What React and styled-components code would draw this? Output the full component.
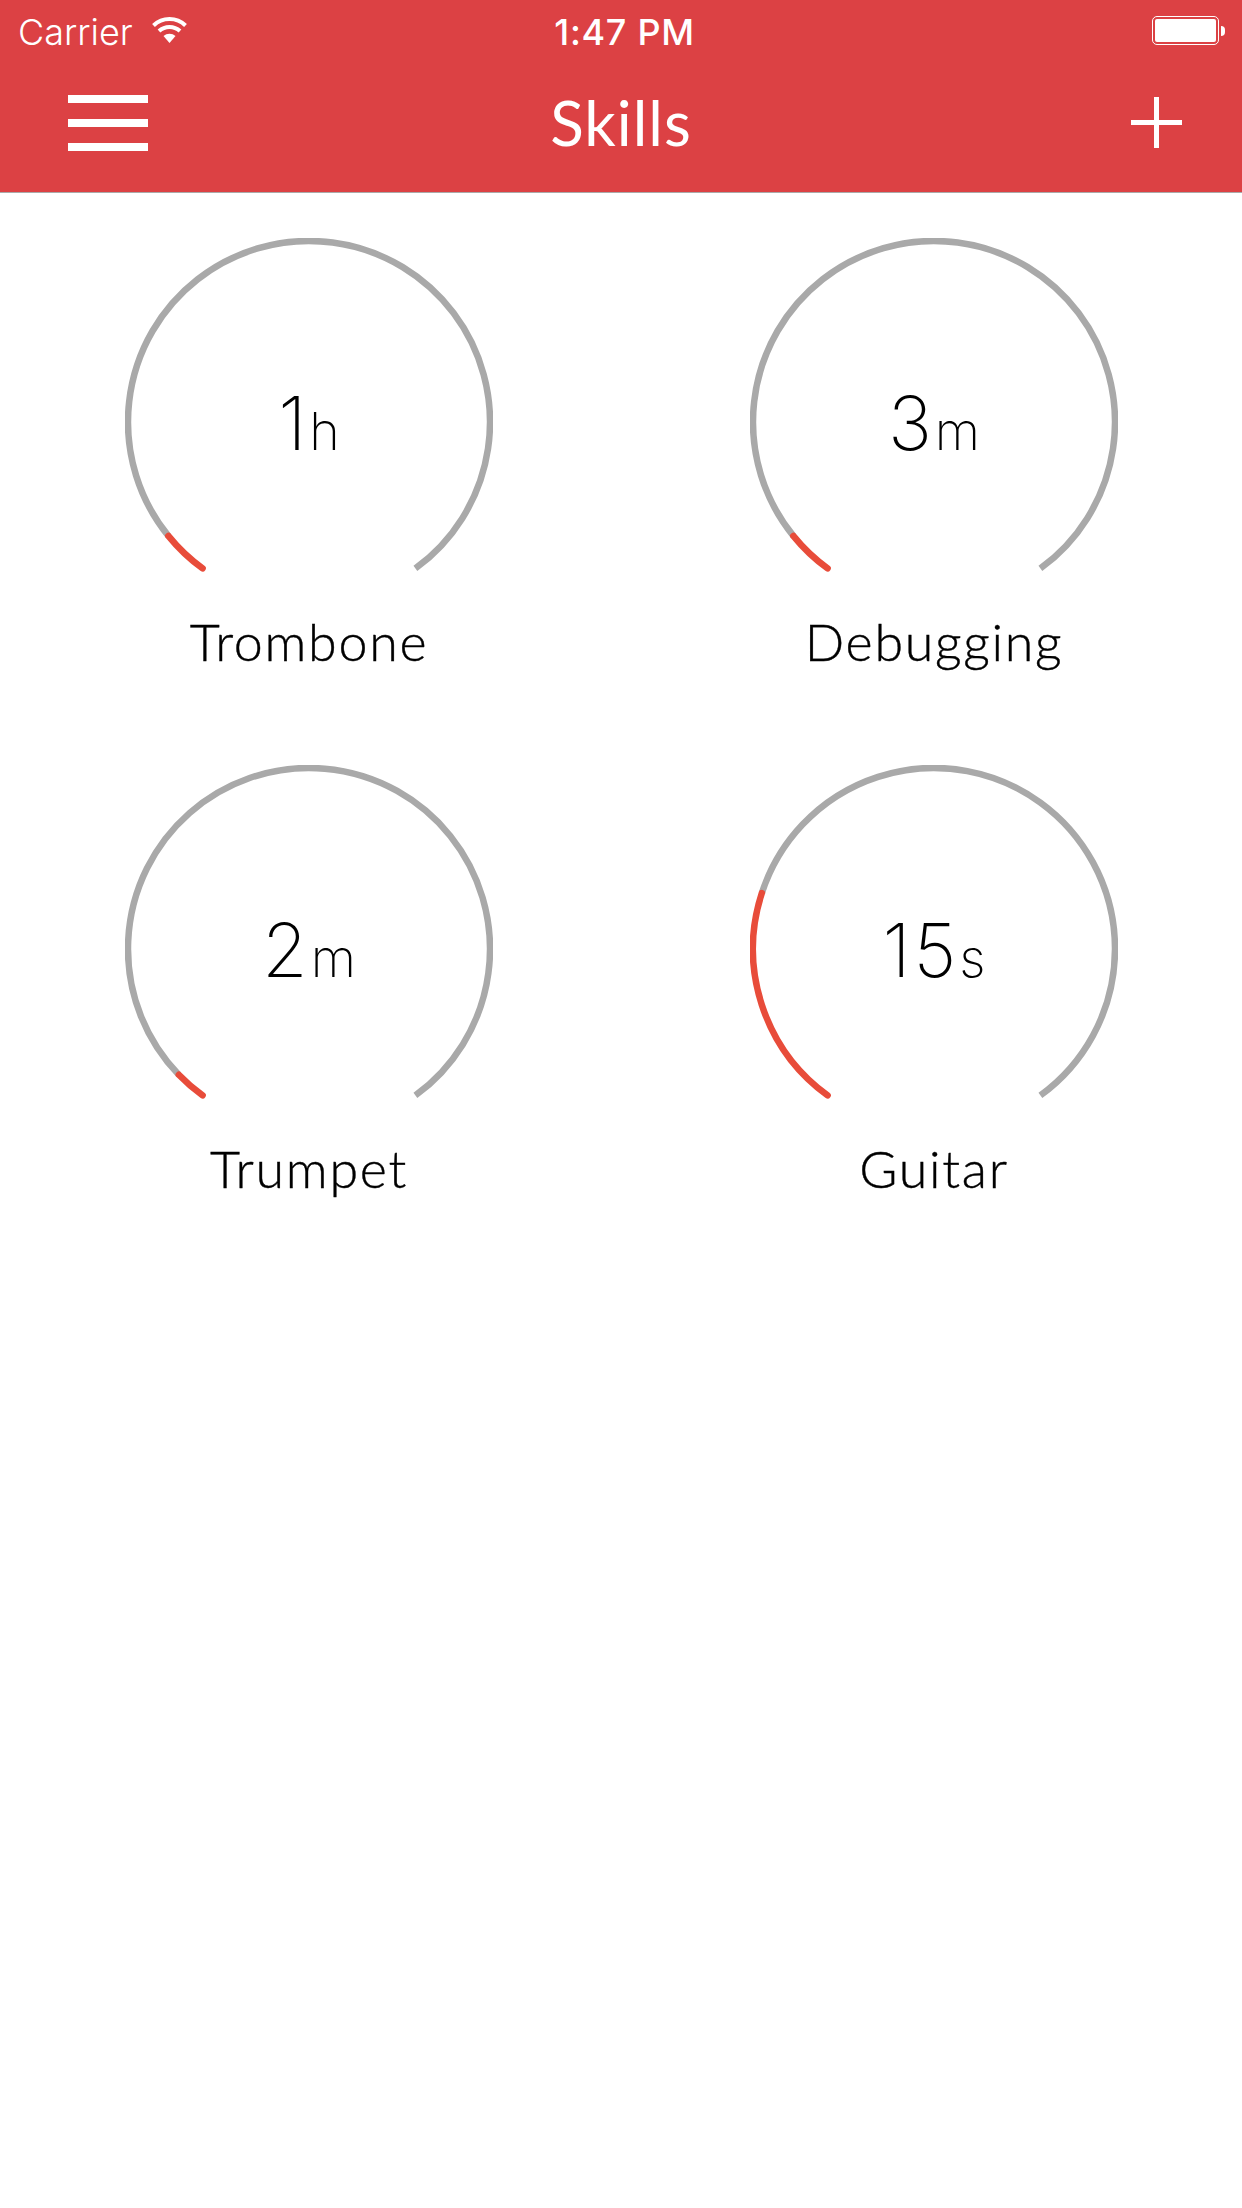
import styled, { createGlobalStyle } from "styled-components";

const GlobalStyle = createGlobalStyle`
  html, body {
    margin: 0;
    padding: 0;
    background: #ffffff;
  }
`;

const skills = [
  { name: "Trombone", value: "1", unit: "h", progress: 15 },
  { name: "Debugging", value: "3", unit: "m", progress: 15 },
  { name: "Trumpet", value: "2", unit: "m", progress: 10 },
  { name: "Guitar", value: "15", unit: "s", progress: 72 }
];

// angles are measured clockwise from straight down
const START = 36;
const END = 324;
const RADIUS = 181;
const CENTER = 184;

const point = (angle) => {
  const rad = (angle * Math.PI) / 180;
  return [CENTER - RADIUS * Math.sin(rad), CENTER + RADIUS * Math.cos(rad)];
};

const arc = (from, to) => {
  const [x1, y1] = point(from);
  const [x2, y2] = point(to);
  const large = to - from > 180 ? 1 : 0;
  return `M${x1} ${y1}A${RADIUS} ${RADIUS} 0 ${large} 1 ${x2} ${y2}`;
};

const Gauge = ({ value, unit, progress }) => {
  const split = START + progress;
  return (
    <Dial>
      <svg width="368" height="368" viewBox="0 0 368 368">
        <path d={arc(split, END)} fill="none" stroke="#a9a9a9" strokeWidth="6.5" />
        <path d={arc(START, split)} fill="none" stroke="#e84c3a" strokeWidth="6.5" strokeLinecap="round" />
      </svg>
      <Reading>
        <Value>{value}</Value>
        <Unit>{unit}</Unit>
      </Reading>
    </Dial>
  );
};

const WifiIcon = () => (
  <svg width="37" height="27" viewBox="0 0 37 27">
    <path d="M2.5 9.5A23 23 0 0 1 34.5 9.5" fill="none" stroke="#fff" strokeWidth="4" />
    <path d="M8 15A15.5 15.5 0 0 1 29 15" fill="none" stroke="#fff" strokeWidth="4" />
    <path d="M18.5 27L12.5 20A9 9 0 0 1 24.5 20Z" fill="#fff" />
  </svg>
);

const App = () => {
  return (
    <Page>
      <GlobalStyle />
      <Header>
        <StatusBar>
          <Carrier>
            Carrier
            <WifiIcon />
          </Carrier>
          <Clock>1:47 PM</Clock>
          <BatterySlot>
            <Battery>
              <BatteryFill />
            </Battery>
            <BatteryTip />
          </BatterySlot>
        </StatusBar>
        <NavBar>
          <MenuButton>
            <MenuBar />
            <MenuBar />
            <MenuBar />
          </MenuButton>
          <Title>Skills</Title>
          <AddButton>
            <svg width="51" height="51" viewBox="0 0 51 51">
              <path d="M0 25.5H51M25.5 0V51" stroke="#fff" strokeWidth="5" />
            </svg>
          </AddButton>
        </NavBar>
      </Header>
      <SkillGrid>
        {skills.map((item) => (
          <Skill key={item.name}>
            <Gauge value={item.value} unit={item.unit} progress={item.progress} />
            <SkillName>{item.name}</SkillName>
          </Skill>
        ))}
      </SkillGrid>
    </Page>
  );
};

export default App;

const Page = styled.div`
  width: 1242px;
  height: 2208px;
  background: #ffffff;
  overflow: hidden;
`;

const Header = styled.header`
  height: 192px;
  background: #dc4144;
  border-bottom: 1px solid #aaaaaa;
  color: #ffffff;
`;

const StatusBar = styled.div`
  height: 60px;
  display: grid;
  grid-template-columns: 1fr auto 1fr;
  align-items: start;
  padding: 0 17px 0 18px;
`;

const Carrier = styled.div`
  display: flex;
  align-items: flex-start;
  gap: 18px;
  padding-top: 16px;
  font-family: "Inter", "Liberation Sans", sans-serif;
  font-size: 36px;
  font-weight: 300;
  line-height: 32px;
`;

const Clock = styled.div`
  margin-left: 6px;
  padding-top: 14px;
  font-family: "Inter", "Liberation Sans", sans-serif;
  font-size: 36px;
  font-weight: 500;
  line-height: 36px;
  letter-spacing: 0.7px;
`;

const BatterySlot = styled.div`
  display: flex;
  justify-content: flex-end;
  align-items: center;
  gap: 2px;
  padding-top: 16px;
`;

const Battery = styled.div`
  box-sizing: border-box;
  width: 67px;
  height: 29px;
  padding: 2px;
  border: 1px solid #ffffff;
  border-radius: 5px;
`;

const BatteryFill = styled.div`
  height: 100%;
  background: #ffffff;
  border-radius: 2px;
`;

const BatteryTip = styled.div`
  width: 4px;
  height: 10px;
  background: #ffffff;
  border-radius: 0 4px 4px 0;
`;

const NavBar = styled.div`
  height: 132px;
  display: grid;
  grid-template-columns: 1fr auto 1fr;
  align-items: center;
  padding: 0 60px;
`;

const MenuButton = styled.div`
  display: flex;
  flex-direction: column;
  gap: 16px;
  margin: -7px 0 0 8px;
`;

const MenuBar = styled.div`
  width: 80px;
  height: 8px;
  background: #ffffff;
`;

const Title = styled.div`
  margin-top: -9px;
  font-family: "Lato", "Liberation Sans", sans-serif;
  font-size: 62px;
  font-weight: 400;
  line-height: 70px;
  letter-spacing: 1px;
`;

const AddButton = styled.div`
  display: flex;
  justify-content: flex-end;
  margin-top: -8px;

  svg {
    display: block;
  }
`;

const SkillGrid = styled.main`
  display: grid;
  grid-template-columns: 368px 368px;
  column-gap: 257px;
  padding: 45px 0 0 125px;
`;

const Skill = styled.div`
  height: 527px;
  display: flex;
  flex-direction: column;
  align-items: center;
`;

const Dial = styled.div`
  position: relative;
  width: 368px;
  height: 368px;

  svg {
    display: block;
  }
`;

const Reading = styled.div`
  position: absolute;
  left: 0;
  right: 0;
  top: 143px;
  display: flex;
  justify-content: center;
  align-items: baseline;
  color: #000000;
  line-height: 84px;
`;

const Value = styled.span`
  font-family: "Inter", "Liberation Sans", sans-serif;
  font-size: 74px;
  font-weight: 150;
  letter-spacing: 3px;
`;

const Unit = styled.span`
  font-family: "Inter", "Liberation Sans", sans-serif;
  font-size: 52px;
  font-weight: 150;
`;

const SkillName = styled.div`
  margin-top: 5px;
  font-family: "Lato", "Liberation Sans", sans-serif;
  font-size: 52px;
  font-weight: 300;
  line-height: 60px;
  letter-spacing: 1.7px;
  -webkit-text-stroke: 0.4px #000000;
  color: #000000;
`;
